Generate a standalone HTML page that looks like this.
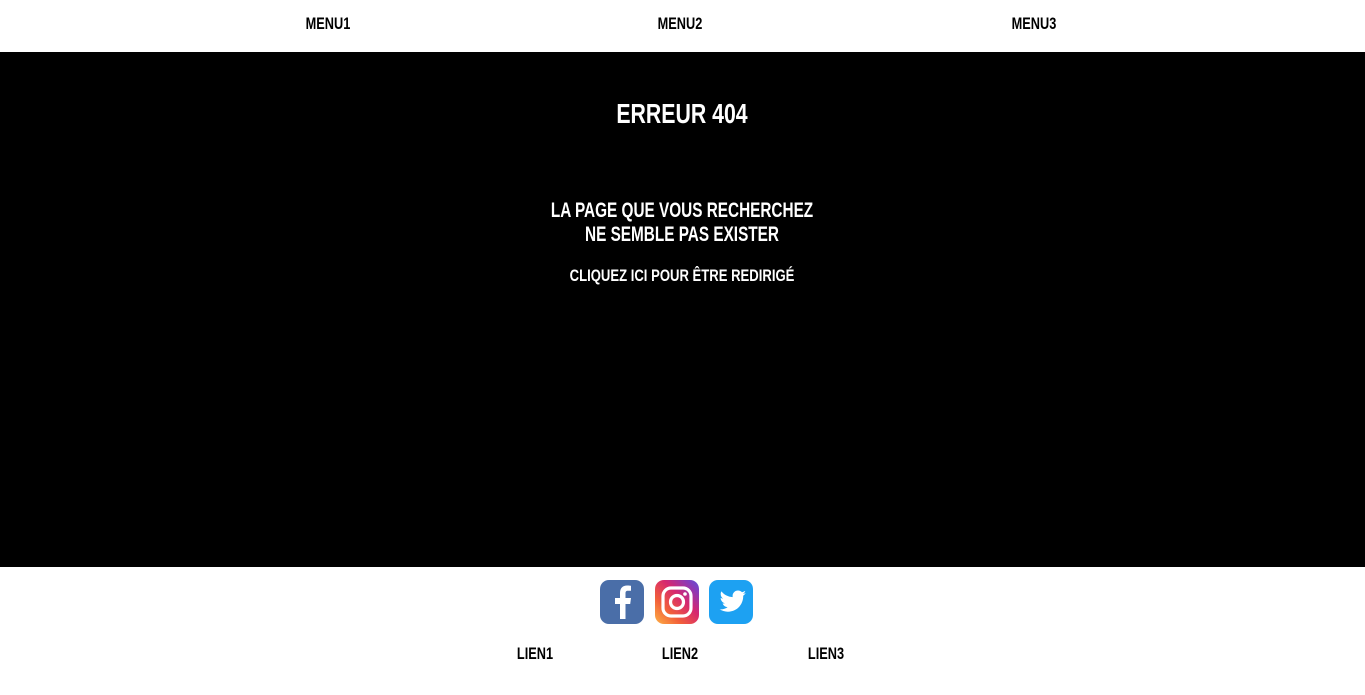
<!DOCTYPE html>
<html><head><meta charset="utf-8"><style>
*{margin:0;padding:0;box-sizing:border-box}
body{width:1365px;height:695px;background:#fff;font-family:"Liberation Sans",sans-serif;font-weight:bold;position:relative;overflow:hidden}
.t{position:absolute;transform:translate(-50%,-50%) scaleX(0.75);white-space:nowrap;text-align:center}
.blk{position:absolute;left:0;top:52px;width:1365px;height:515px;background:#000}
.w{color:#fff}
.ic{position:absolute;top:580px;width:44px;height:44px;border-radius:9px;overflow:hidden}
</style></head><body>
<div class="t" style="left:328px;top:24px;font-size:17px">MENU1</div>
<div class="t" style="left:680px;top:24px;font-size:17px">MENU2</div>
<div class="t" style="left:1034px;top:24px;font-size:17px">MENU3</div>
<div class="blk"></div>
<div class="t w" style="left:682px;top:114px;font-size:28px;transform:translate(-50%,-50%) scaleX(0.76)">ERREUR 404</div>
<div class="t w" style="left:682px;top:223px;font-size:21px;line-height:24px;transform:translate(-50%,-50%) scaleX(0.73)">LA PAGE QUE VOUS RECHERCHEZ<br>NE SEMBLE PAS EXISTER</div>
<div class="t w" style="left:682px;top:276px;font-size:17px;transform:translate(-50%,-50%) scaleX(0.77)">CLIQUEZ ICI POUR ÊTRE REDIRIGÉ</div>
<div class="ic" style="left:600px;background:#4a6ea8">
<svg width="44" height="44" viewBox="0 0 44 44"><path d="M20 39V24h-5v-6h5v-5c0-5 3-7.500 7-7.500 2 0 3.500.2 4 .3v5h-3c-2 0-2.500 1-2.500 2.500V18h5.500l-.8 6H25.500v15z" fill="#fff"/></svg></div>
<div class="ic" style="left:655px;background:linear-gradient(45deg,#fdb144 0%,#f2603a 30%,#d6276f 60%,#8a3ab9 85%,#5b51d8 100%)">
<svg width="44" height="44" viewBox="0 0 44 44"><rect x="8" y="8" width="28" height="28" rx="8" fill="none" stroke="#fff" stroke-width="3.2"/><circle cx="22" cy="22" r="6.5" fill="none" stroke="#fff" stroke-width="3.2"/><circle cx="30" cy="14" r="1.8" fill="#fff"/></svg></div>
<div class="ic" style="left:709px;background:#1da1f2">
<svg width="44" height="44" viewBox="0 0 44 44"><path d="M37 13c-1 .5-2 .7-3 .9 1-.7 2-1.700 2.300-3-1 .6-2.200 1-3.300 1.300-1-1-2.400-1.700-4-1.700-3 0-5.400 2.400-5.400 5.400 0 .4 0 .8.1 1.200C19 16.900 15 14.700 12.400 11.400c-.5.800-.7 1.700-.7 2.700 0 1.900 1 3.500 2.400 4.500-.9 0-1.700-.3-2.400-.7v.1c0 2.600 1.900 4.800 4.300 5.300-.5.100-.9.200-1.400.200-.3 0-.7 0-1-.1.700 2.100 2.700 3.700 5 3.700-1.800 1.400-4.200 2.300-6.700 2.300-.4 0-.9 0-1.300-.1 2.400 1.500 5.200 2.400 8.300 2.400 9.900 0 15.300-8.200 15.300-15.300v-.7c1-.7 1.900-1.700 2.600-2.700z" fill="#fff"/></svg></div>
<div class="t" style="left:535px;top:654px;font-size:17px">LIEN1</div>
<div class="t" style="left:680px;top:654px;font-size:17px">LIEN2</div>
<div class="t" style="left:826px;top:654px;font-size:17px">LIEN3</div>
</body></html>
